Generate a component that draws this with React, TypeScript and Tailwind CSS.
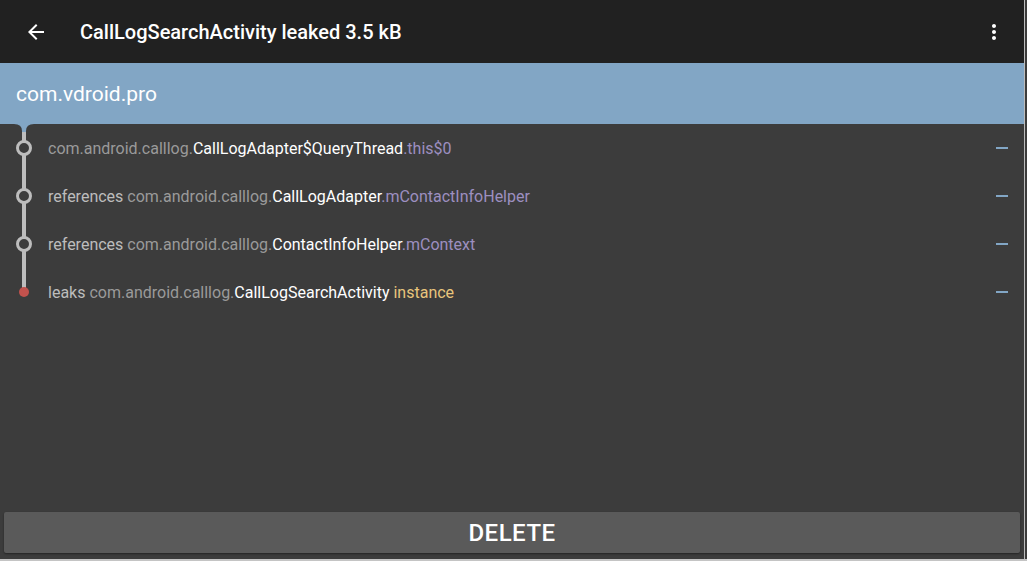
import React from "react";

type Part = { t: string; c: "verb" | "pkg" | "cls" | "field" | "inst" };

const rows: Part[][] = [
  [
    { t: "com.android.calllog.", c: "pkg" },
    { t: "CallLogAdapter$QueryThread", c: "cls" },
    { t: ".this$0", c: "field" },
  ],
  [
    { t: "references ", c: "verb" },
    { t: "com.android.calllog.", c: "pkg" },
    { t: "CallLogAdapter", c: "cls" },
    { t: ".mContactInfoHelper", c: "field" },
  ],
  [
    { t: "references ", c: "verb" },
    { t: "com.android.calllog.", c: "pkg" },
    { t: "ContactInfoHelper", c: "cls" },
    { t: ".mContext", c: "field" },
  ],
  [
    { t: "leaks ", c: "verb" },
    { t: "com.android.calllog.", c: "pkg" },
    { t: "CallLogSearchActivity", c: "cls" },
    { t: " instance", c: "inst" },
  ],
];

const colorFor: Record<Part["c"], string> = {
  verb: "text-[#bdbdbd]",
  pkg: "text-[#9a9a9a]",
  cls: "text-white",
  field: "text-[#9d8fc0]",
  inst: "text-[#e8c57c]",
};

function Node({ index, last }: { index: number; last: boolean }) {
  return (
    <svg width="48" height="48" viewBox="0 0 48 48" className="shrink-0">
      {index === 0 && (
        <path d="M14 0 Q22 0 22 7 L22 9 L26 9 L26 7 Q26 0 34 0 Z" fill="#82a6c5" />
      )}
      {!last && <rect x="22" y={index === 0 ? 8 : 0} width="4" height={index === 0 ? 40 : 48} fill="#bdbdbd" />}
      {last && <rect x="22" y="0" width="4" height="22" fill="#bdbdbd" />}
      {last ? (
        <circle cx="24" cy="24" r="5" fill="#c2524d" />
      ) : (
        <circle cx="24" cy="24" r="6.5" fill="#3c3c3c" stroke="#bdbdbd" strokeWidth="3" />
      )}
    </svg>
  );
}

export default function App() {
  return (
    <div className="w-[1027px] h-[561px] flex flex-col bg-[#c4c4c4] font-['Roboto',sans-serif] overflow-hidden">
      <div className="flex h-[559px]">
        <div className="w-[1024px] flex flex-col bg-[#3c3c3c]">
          {/* toolbar */}
          <div className="h-[63px] bg-[#212121] flex items-center pl-6 pr-[18px]">
            <svg width="24" height="24" viewBox="0 0 24 24" className="shrink-0">
              <path fill="#ffffff" d="M20 11H7.83l5.59-5.59L12 4l-8 8 8 8 1.41-1.41L7.83 13H20v-2z" />
            </svg>
            <div className="ml-8 text-white text-[20px] font-medium flex-1">CallLogSearchActivity leaked 3.5 kB</div>
            <svg width="24" height="24" viewBox="0 0 24 24" className="shrink-0">
              <path
                fill="#ffffff"
                d="M12 8c1.1 0 2-.9 2-2s-.9-2-2-2-2 .9-2 2 .9 2 2 2zm0 2c-1.1 0-2 .9-2 2s.9 2 2 2 2-.9 2-2-.9-2-2-2zm0 6c-1.1 0-2 .9-2 2s.9 2 2 2 2-.9 2-2-.9-2-2-2z"
              />
            </svg>
          </div>

          {/* app header */}
          <div className="h-[61px] bg-[#82a6c5] flex items-center pl-4 pt-[3px] text-white text-[21px]">com.vdroid.pro</div>

          {/* trace */}
          <div className="flex flex-col">
            {rows.map((parts, i) => (
              <div key={i} className="flex items-center h-12">
                <Node index={i} last={i === rows.length - 1} />
                <div className="flex-1 text-[16px] whitespace-nowrap pt-[2px]">
                  {parts.map((p, j) => (
                    <span key={j} className={colorFor[p.c]}>
                      {p.t}
                    </span>
                  ))}
                </div>
                <div className="w-3 h-[2px] bg-[#82a6c5] mr-4" />
              </div>
            ))}
          </div>

          <div className="flex-1" />

          <div className="px-1 pb-[6px]">
            <button className="w-[1016px] h-[41px] bg-[#5a5a5a] rounded-[2px] shadow-[0_1px_2px_rgba(0,0,0,0.4)] text-white text-[24px] font-medium tracking-[0.5px]">
              DELETE
            </button>
          </div>
        </div>
        <div className="w-px bg-[#bdbdbd]" />
        <div className="flex-1 bg-[#3c3c3c]" />
      </div>
      <div className="h-[2px] bg-[#c4c4c4]" />
    </div>
  );
}
